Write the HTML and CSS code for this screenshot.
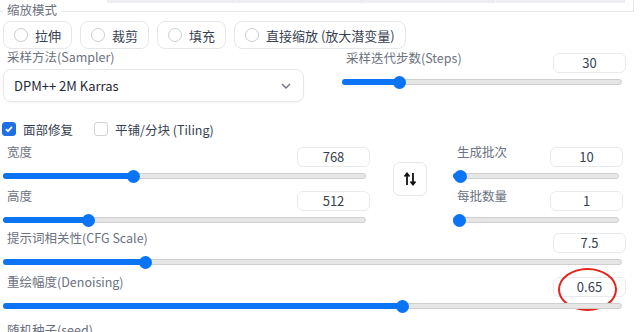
FILE: index.html
```html
<!DOCTYPE html>
<html lang="zh">
<head>
    <meta charset="UTF-8">
    <title>txt2img settings</title>
    <link rel="stylesheet" href="styles.css">
</head>
<body>
    <div class="top-box">
        <div class="top-bar"><span></span><span></span><span></span><span></span></div>
    </div>
    <div class="legend">缩放模式</div>

    <div class="page">
        <div class="radio-row">
            <label class="pill"><span class="radio"></span>拉伸</label>
            <label class="pill"><span class="radio"></span>裁剪</label>
            <label class="pill"><span class="radio"></span>填充</label>
            <label class="pill"><span class="radio"></span>直接缩放 (放大潜变量)</label>
        </div>

        <div class="sampler-row">
            <div class="sampler">
                <div class="field-label">采样方法(Sampler)</div>
                <div class="dropdown">
                    <span>DPM++ 2M Karras</span>
                    <svg width="12" height="8" viewBox="0 0 12 8"><path d="M2 2l4 4 4-4" fill="none" stroke="#6b7280" stroke-width="1.4"/></svg>
                </div>
            </div>
            <div class="slider-block steps">
                <div class="slider-head">
                    <span class="field-label">采样迭代步数(Steps)</span>
                    <span class="num">30</span>
                </div>
                <div class="track"><div class="fill" style="width:20.4%"></div><div class="thumb" style="left:20.4%"></div></div>
            </div>
        </div>

        <div class="check-row">
            <label class="check"><span class="box on"><svg width="10" height="10" viewBox="0 0 10 10"><path d="M2 5.2l2 2 4-4.4" fill="none" stroke="#fff" stroke-width="1.8"/></svg></span>面部修复</label>
            <label class="check"><span class="box"></span>平铺/分块 (Tiling)</label>
        </div>

        <div class="size-grid">
            <div class="size-col">
                <div class="slider-block">
                    <div class="slider-head">
                        <span class="field-label">宽度</span>
                        <span class="num">768</span>
                    </div>
                    <div class="track"><div class="fill" style="width:35.8%"></div><div class="thumb" style="left:35.8%"></div></div>
                </div>
                <div class="slider-block">
                    <div class="slider-head">
                        <span class="field-label">高度</span>
                        <span class="num">512</span>
                    </div>
                    <div class="track"><div class="fill" style="width:23.4%"></div><div class="thumb" style="left:23.4%"></div></div>
                </div>
            </div>
            <button class="swap">
                <svg width="14" height="14" viewBox="0 0 14 14"><path d="M4 13V2M1.5 4.5L4 1.5l2.5 3M10 1v11M7.5 9.5l2.5 3 2.5-3" fill="none" stroke="#111" stroke-width="1.8"/></svg>
            </button>
            <div class="size-col">
                <div class="slider-block">
                    <div class="slider-head">
                        <span class="field-label">生成批次</span>
                        <span class="num">10</span>
                    </div>
                    <div class="track"><div class="fill" style="width:4.1%"></div><div class="thumb" style="left:4.1%"></div></div>
                </div>
                <div class="slider-block">
                    <div class="slider-head">
                        <span class="field-label">每批数量</span>
                        <span class="num">1</span>
                    </div>
                    <div class="track"><div class="fill" style="width:3.6%"></div><div class="thumb" style="left:3.6%"></div></div>
                </div>
            </div>
        </div>

        <div class="slider-block cfg">
            <div class="slider-head">
                <span class="field-label">提示词相关性(CFG Scale)</span>
                <span class="num">7.5</span>
            </div>
            <div class="track"><div class="fill" style="width:22.9%"></div><div class="thumb" style="left:22.9%"></div></div>
        </div>

        <div class="slider-block">
            <div class="slider-head">
                <span class="field-label">重绘幅度(Denoising)</span>
                <span class="num">0.65<span class="circle"></span></span>
            </div>
            <div class="track"><div class="fill" style="width:64.6%"></div><div class="thumb" style="left:64.6%"></div></div>
        </div>

        <div class="field-label seed">随机种子(seed)</div>
    </div>
</body>
</html>
```

FILE: styles.css
```css
body {
    margin: 0;
    font-family: "Noto Sans CJK SC", "Noto Sans", sans-serif;
    background: #fff;
    color: #374151;
    position: relative;
    overflow: hidden;
}
.top-box {
    width: 633px;
    height: 11px;
    border-right: 1px solid #e5e7eb;
    border-bottom: 1px solid #e5e7eb;
    box-sizing: content-box;
}
.top-bar {
    margin-left: 107px;
    width: 518px;
    height: 3px;
    display: grid;
    grid-template-columns: 129px 129px 128px 1fr;
    gap: 1px;
    background: #f6f7f8;
}
.top-bar span {
    background: #eceef1;
}
.legend {
    position: absolute;
    top: 2px;
    left: 3px;
    padding: 0 4px;
    background: #fff;
    font-size: 12.5px;
    line-height: 16px;
    color: #6b7280;
}
.page {
    padding: 0 14px 0 3px;
}
.radio-row {
    display: flex;
    gap: 8px;
    margin-top: 9px;
}
.pill {
    display: flex;
    align-items: center;
    gap: 7px;
    height: 28px;
    box-sizing: border-box;
    padding: 0 10px;
    border: 1px solid #e5e7eb;
    border-radius: 8px;
    font-size: 13px;
    color: #374151;
}
.radio {
    width: 14px;
    height: 14px;
    box-sizing: border-box;
    border: 1px solid #c9ced6;
    border-radius: 50%;
}
.sampler-row {
    display: grid;
    grid-template-columns: 301px 1fr;
    gap: 38px;
}
.field-label {
    font-size: 12.5px;
    line-height: 16px;
    color: #6b7280;
    padding-left: 4px;
}
.dropdown {
    margin-top: 4px;
    height: 33px;
    box-sizing: border-box;
    border: 1px solid #e5e7eb;
    border-radius: 8px;
    padding: 0 11px 0 10px;
    display: flex;
    align-items: center;
    justify-content: space-between;
    font-size: 13px;
    color: #1f2937;
    box-shadow: 0 1px 2px rgba(0, 0, 0, 0.04);
}
.slider-block {
    margin-bottom: 9px;
}
.steps {
    padding-top: 1px;
    margin-bottom: 0;
}
.slider-head {
    display: flex;
    justify-content: space-between;
    align-items: flex-start;
}
.num {
    position: relative;
    margin-top: 3px;
    width: 73px;
    height: 20px;
    box-sizing: border-box;
    border: 1px solid #e8eaed;
    border-radius: 6px;
    font-size: 13px;
    line-height: 18px;
    text-align: center;
    color: #374151;
}
.track {
    position: relative;
    margin: 6px 4px 3px 0;
    height: 6px;
    box-sizing: border-box;
    background: #e6e6e6;
    border: 1px solid #cfcfcf;
    border-radius: 3px;
}
.fill {
    position: absolute;
    left: -1px;
    top: -1px;
    height: 6px;
    background: #0b74f5;
    border-radius: 3px;
}
.thumb {
    position: absolute;
    top: -4.5px;
    width: 13px;
    height: 13px;
    margin-left: -6.5px;
    background: #0b74f5;
    border-radius: 50%;
}
.check-row {
    display: flex;
    gap: 22px;
    margin-top: 17px;
    height: 20px;
    align-items: center;
}
.check {
    display: flex;
    align-items: center;
    gap: 7px;
    font-size: 12.5px;
    color: #374151;
}
.box {
    width: 14px;
    height: 14px;
    margin-left: -1px;
    box-sizing: border-box;
    border: 1px solid #cfd3da;
    border-radius: 3px;
    display: flex;
    align-items: center;
    justify-content: center;
}
.box.on {
    background: #1f6fe5;
    border-color: #1f6fe5;
}
.size-grid {
    display: grid;
    grid-template-columns: 367px 34px 173px;
    column-gap: 23px;
    margin-top: 5px;
    margin-bottom: -2px;
}
.size-col {
    display: flow-root;
}
.size-grid .size-col:last-child {
    margin-left: 3px;
}
.swap {
    margin-top: 18px;
    width: 34px;
    height: 34px;
    padding: 0;
    border: 1px solid #e5e7eb;
    border-radius: 7px;
    background: #fff;
    display: flex;
    align-items: center;
    justify-content: center;
}
.circle {
    position: absolute;
    left: 4px;
    top: -10px;
    width: 59px;
    height: 43px;
    box-sizing: border-box;
    border: 2px solid #e3241b;
    border-radius: 50%;
}
.seed {
    margin-top: 13px;
}
```
